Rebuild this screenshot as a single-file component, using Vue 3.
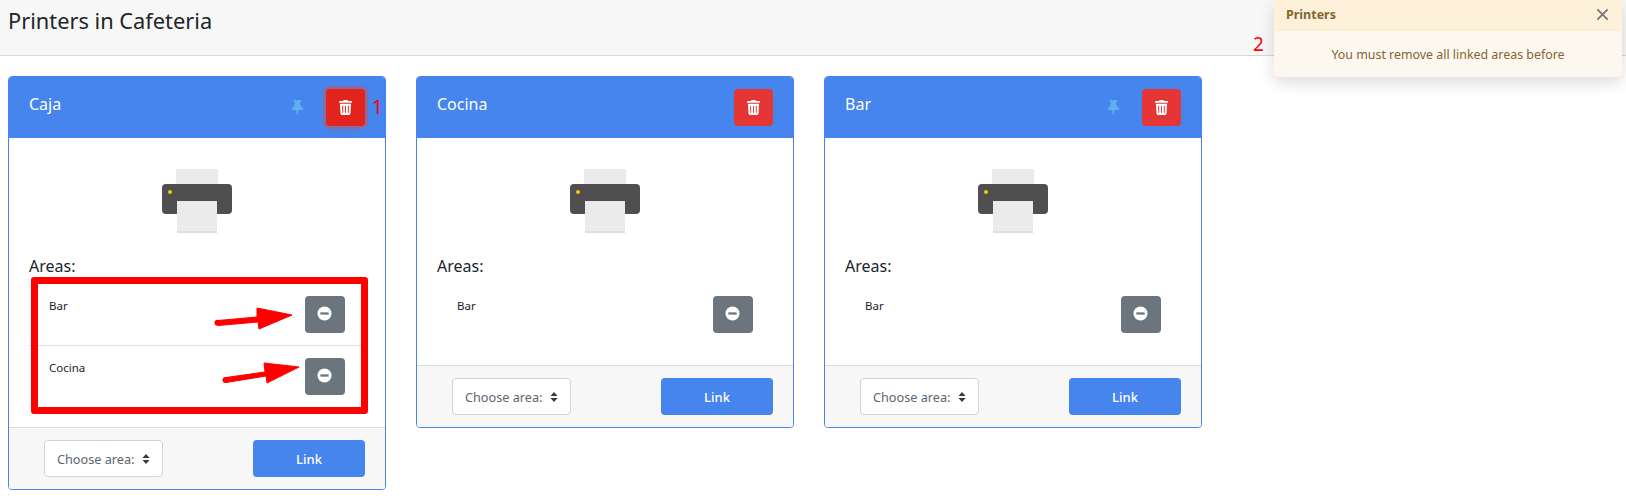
<template>
  <div class="page">
    <header class="top-bar">
      <h1>Printers in Cafeteria</h1>
    </header>

    <main class="cards">
      <section v-for="printer in printers" :key="printer.name" class="card">
        <div class="card-header">
          <span class="card-title">{{ printer.name }}</span>
          <svg v-if="printer.pinned" class="pin" viewBox="0 0 384 512">
            <path d="M298 214 285 64h35c9 0 16-7 16-16V16c0-9-7-16-16-16H64c-9 0-16 7-16 16v32c0 9 7 16 16 16h35L86 214C38 237 0 277 0 328c0 9 7 16 16 16h136v104l24 48c3 6 12 6 15 0l24-48V344h153c9 0 16-7 16-16 0-52-39-91-86-114z" />
          </svg>
          <button class="btn-delete" :class="{ focused: printer.focused }">
            <svg viewBox="0 0 448 512">
              <path d="M432 32H312l-9-19a24 24 0 0 0-22-13H167a24 24 0 0 0-21 13l-10 19H16A16 16 0 0 0 0 48v32a16 16 0 0 0 16 16h416a16 16 0 0 0 16-16V48a16 16 0 0 0-16-16zM53 467a48 48 0 0 0 48 45h246a48 48 0 0 0 48-45l21-339H32zm251-259a16 16 0 0 1 32 0v224a16 16 0 0 1-32 0zm-96 0a16 16 0 0 1 32 0v224a16 16 0 0 1-32 0zm-96 0a16 16 0 0 1 32 0v224a16 16 0 0 1-32 0z" />
            </svg>
          </button>
        </div>

        <div class="card-body">
          <div class="printer-icon">
            <svg width="70" height="66" viewBox="0 0 70 66">
              <rect x="14" y="1" width="42" height="30" fill="#ebebeb" />
              <rect x="0" y="16" width="70" height="30" rx="4" fill="#4f4f4f" />
              <circle cx="8" cy="24" r="2" fill="#f2c40f" />
              <rect x="15" y="33" width="40" height="31" fill="#ebebeb" />
              <rect x="15" y="63" width="40" height="2" fill="#dedede" />
            </svg>
          </div>
          <div class="areas-label">Areas:</div>
          <ul class="areas">
            <li v-for="area in printer.areas" :key="area" class="area-row">
              <span class="area-name">{{ area }}</span>
              <button class="btn-remove">
                <svg viewBox="0 0 16 16">
                  <circle cx="8" cy="8" r="7.500" fill="#fff" />
                  <rect x="3.600" y="6.800" width="8.800" height="2.400" fill="#6c757d" />
                </svg>
              </button>
            </li>
          </ul>
        </div>

        <div class="card-footer">
          <select class="area-select">
            <option>Choose area:</option>
          </select>
          <button class="btn-link">Link</button>
        </div>
      </section>
    </main>

    <aside class="toast">
      <div class="toast-header">
        <strong>Printers</strong>
        <svg class="toast-close" viewBox="0 0 14 14">
          <path d="M1.500 1.500l11 11M12.500 1.500l-11 11" />
        </svg>
      </div>
      <div class="toast-body">You must remove all linked areas before</div>
    </aside>

    <!-- annotations drawn on top of the screenshot -->
    <span class="mark mark-1">1</span>
    <span class="mark mark-2">2</span>
    <div class="mark-box"></div>
    <svg class="mark-arrows" width="400" height="502" viewBox="0 0 400 502">
      <g fill="#f00" stroke="#f00" stroke-linejoin="round">
        <path d="M218 320.500 257 317 257 308 292 315 259 329 258 322 218 325.500Z" />
        <path d="M226 377.500 265 372 264 363 299 367 267 383 266 376 226 382.500Z" />
      </g>
      <circle cx="217.500" cy="322.800" r="3" fill="#f00" />
      <circle cx="225.500" cy="380" r="3" fill="#f00" />
    </svg>
  </div>
</template>

<script setup>
const printers = [
  { name: 'Caja', pinned: true, focused: true, areas: ['Bar', 'Cocina'] },
  { name: 'Cocina', pinned: false, focused: false, areas: ['Bar'] },
  { name: 'Bar', pinned: true, focused: false, areas: ['Bar'] },
]
</script>

<style>
html,
body {
  background: #fff;
  overflow: hidden;
}
</style>

<style scoped>
.page {
  position: relative;
  height: 502px;
  font-family: "Noto Sans", "Open Sans", sans-serif;
  color: #212529;
}

.top-bar {
  height: 55px;
  background: #f7f7f7;
  border-bottom: 1px solid #d8d8d8;
  padding-left: 8px;
}

.top-bar h1 {
  margin: 0;
  font-size: 21.800px;
  font-weight: 400;
  line-height: 42px;
}

.cards {
  display: flex;
  align-items: flex-start;
  gap: 30px;
  padding: 20px 8px 0;
}

.card {
  width: 378px;
  box-sizing: border-box;
  border: 1px solid #4684ee;
  border-radius: 4px;
  background: #fff;
  overflow: hidden;
}

.card-header {
  display: flex;
  align-items: center;
  height: 61px;
  background: #4684ee;
  padding: 0 20px;
  box-sizing: border-box;
}

.card-title {
  flex: 1;
  color: #fff;
  font-size: 16px;
  padding-bottom: 7px;
}

.pin {
  width: 11px;
  height: 15px;
  fill: #5fb0ee;
  margin-right: 23px;
}

.btn-delete {
  display: flex;
  align-items: center;
  justify-content: center;
  width: 39px;
  height: 37px;
  padding: 0;
  border: none;
  border-radius: 4px;
  background: #e53535;
}

.btn-delete.focused {
  background: #e3241c;
  box-shadow: 0 0 0 3px #8b6a9e;
}

.btn-delete svg {
  width: 13px;
  height: 15px;
  fill: #fff;
}

.card-body {
  padding: 30px 20px 20px;
}

.printer-icon {
  display: flex;
  justify-content: center;
  height: 66px;
  margin-bottom: 20px;
}

.areas-label {
  font-size: 16px;
  line-height: 24px;
  margin-bottom: 5px;
}

.areas {
  list-style: none;
  margin: 0;
  padding: 0;
}

.area-row {
  display: flex;
  justify-content: space-between;
  align-items: flex-start;
  height: 62px;
  box-sizing: border-box;
  padding: 13px 20px 0;
}

.area-row + .area-row {
  border-top: 1px solid #dcdfe3;
  padding-top: 12px;
}

.area-name {
  font-size: 11.500px;
  line-height: 17px;
  margin-top: 1px;
}

.btn-remove {
  display: flex;
  align-items: center;
  justify-content: center;
  width: 40px;
  height: 37px;
  padding: 0 2px 2px 0;
  border: none;
  border-radius: 4px;
  background: #6c757d;
}

.btn-remove svg {
  width: 15px;
  height: 15px;
}

.card-footer {
  display: flex;
  justify-content: space-between;
  align-items: center;
  height: 62px;
  box-sizing: border-box;
  padding: 0 20px 0 35px;
  background: #f7f7f7;
  border-top: 1px solid #d8dce0;
}

.area-select {
  width: 119px;
  height: 37px;
  box-sizing: border-box;
  appearance: none;
  border: 1px solid #ced4da;
  border-radius: 4px;
  padding: 0 0 0 12px;
  font-family: inherit;
  font-size: 12.700px;
  color: #5c6670;
  background: #fff url("data:image/svg+xml,%3Csvg xmlns='http://www.w3.org/2000/svg' width='8' height='12'%3E%3Cpath fill='%23343a40' d='M4 1l3.500 4h-7zM4 11l3.500-4h-7z'/%3E%3C/svg%3E") no-repeat right 12px center;
}

.btn-link {
  width: 112px;
  height: 37px;
  border: none;
  border-radius: 4px;
  background: #4684ee;
  color: #fff;
  font-family: inherit;
  font-size: 13px;
  font-weight: 500;
}

.toast {
  position: absolute;
  top: 0;
  right: 4px;
  width: 348px;
  height: 77px;
  border-radius: 0 0 4px 4px;
  background: #fdf8ef;
  color: #856530;
  box-shadow: 0 6px 16px rgba(0, 0, 0, 0.14);
  font-size: 12.400px;
}

.toast-header {
  display: flex;
  justify-content: space-between;
  align-items: center;
  height: 31px;
  box-sizing: border-box;
  padding: 0 13px 2px 12px;
  background: #fdf1da;
  border-bottom: 1px solid #fbeed6;
  font-size: 12.500px;
}

.toast-close {
  width: 13px;
  height: 13px;
  fill: none;
  stroke: #777;
  stroke-width: 2;
}

.toast-body {
  text-align: center;
  line-height: 18px;
  padding-top: 15px;
}

.mark {
  position: absolute;
  color: #f00;
  font-size: 19px;
  line-height: 22px;
}

.mark-1 {
  left: 372px;
  top: 96px;
}

.mark-2 {
  left: 1253px;
  top: 33px;
}

.mark-box {
  position: absolute;
  left: 31px;
  top: 277px;
  width: 337px;
  height: 137px;
  box-sizing: border-box;
  border: 7px solid #f00;
  border-radius: 3px;
}

.mark-arrows {
  position: absolute;
  left: 0;
  top: 0;
  pointer-events: none;
}
</style>
